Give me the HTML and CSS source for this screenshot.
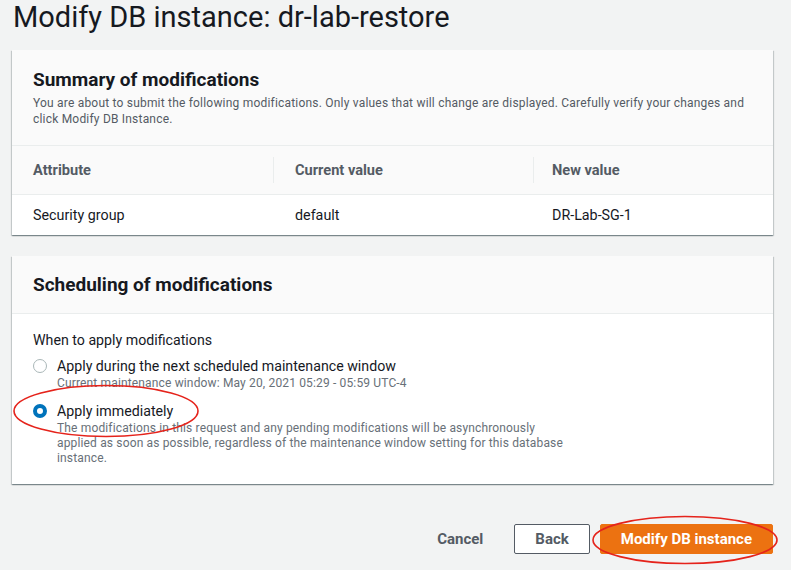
FILE: index.html
```html
<!DOCTYPE html>
<html>
<head>
<meta charset="utf-8">
<link rel="stylesheet" href="styles.css">
</head>
<body>
<div class="page">
  <h1 class="title">Modify DB instance: dr-lab-restore</h1>

  <section class="panel">
    <div class="panel-head head1">
      <h2 class="panel-title">Summary of modifications</h2>
      <p class="panel-desc">You are about to submit the following modifications. Only values that will change are displayed. Carefully verify your changes and click Modify DB Instance.</p>
    </div>
    <div class="table">
      <div class="tr th">
        <div class="cell c1">Attribute</div>
        <div class="cell c2 sep">Current value</div>
        <div class="cell c3 sep">New value</div>
      </div>
      <div class="tr td">
        <div class="cell c1">Security group</div>
        <div class="cell c2">default</div>
        <div class="cell c3">DR-Lab-SG-1</div>
      </div>
    </div>
  </section>

  <section class="panel panel2">
    <div class="panel-head head2">
      <h2 class="panel-title">Scheduling of modifications</h2>
    </div>
    <div class="panel-body">
      <div class="field-label">When to apply modifications</div>
      <div class="radio-row">
        <span class="radio"></span>
        <div class="radio-text">
          <div class="radio-label">Apply during the next scheduled maintenance window</div>
          <div class="radio-desc">Current maintenance window: May 20, 2021 05:29 - 05:59 UTC-4</div>
        </div>
      </div>
      <div class="radio-row second">
        <span class="radio checked"></span>
        <div class="radio-text">
          <div class="radio-label">Apply immediately</div>
          <div class="radio-desc wrap">The modifications in this request and any pending modifications will be asynchronously applied as soon as possible, regardless of the maintenance window setting for this database instance.</div>
        </div>
      </div>
    </div>
  </section>

  <div class="actions">
    <button class="btn btn-link">Cancel</button>
    <button class="btn btn-normal">Back</button>
    <button class="btn btn-primary">Modify DB instance</button>
  </div>

  <svg class="annot" width="791" height="570" viewBox="0 0 791 570">
    <ellipse cx="106" cy="411" rx="92" ry="25.5" fill="none" stroke="#e5231b" stroke-width="1.6"/>
    <ellipse cx="685" cy="540" rx="92" ry="23.5" fill="none" stroke="#e5231b" stroke-width="1.6"/>
  </svg>
</div>
</body>
</html>
```

FILE: styles.css
```css
html, body {
  margin: 0;
  padding: 0;
  background: #f2f3f3;
}

body {
  font-family: Roboto, "Noto Sans", sans-serif;
  color: #16191f;
  width: 791px;
  height: 570px;
  overflow: hidden;
}

.page {
  position: relative;
  padding: 0 18px 0 12px;
  height: 570px;
  box-sizing: border-box;
}

.title {
  margin: 0 0 0 1px;
  font-size: 29px;
  line-height: 34px;
  font-weight: 400;
  color: #16191f;
}

.panel {
  margin-top: 16px;
  background: #fff;
  box-shadow: 0 1px 1px 0 rgba(0, 28, 36, 0.3), 1px 1px 1px 0 rgba(0, 28, 36, 0.15), -1px 1px 1px 0 rgba(0, 28, 36, 0.15);
}

.panel2 {
  margin-top: 21px;
}

.panel-head {
  background: #fafafa;
  border-bottom: 1px solid #eaeded;
}

.head1 {
  padding: 19px 21px 18px 21px;
}

.head2 {
  padding: 18px 21px 17px 21px;
}

.panel-title {
  margin: 0;
  font-size: 19px;
  line-height: 22px;
  font-weight: 700;
  color: #16191f;
}

.panel-desc {
  margin: 4px 0 0 0;
  font-size: 12px;
  line-height: 16px;
  letter-spacing: 0.2px;
  color: #545b64;
}

.tr {
  display: grid;
  grid-template-columns: 261px 260px 1fr;
}

.th {
  background: #fafafa;
  padding: 11px 0;
  height: 48px;
  box-sizing: border-box;
}

.th .cell {
  height: 26px;
  line-height: 26px;
  font-size: 14.6px;
  font-weight: 700;
  color: #545b64;
}

.td {
  border-top: 1px solid #eaeded;
  padding: 10px 0;
}

.td .cell {
  font-size: 14.3px;
  line-height: 20px;
  color: #16191f;
}

.c1 {
  padding-left: 21px;
}

.c2 {
  padding-left: 21px;
}

.c3 {
  padding-left: 18px;
}

.th .sep {
  border-left: 1px solid #eaeded;
}

.td .c2 {
  padding-left: 22px;
}

.td .c3 {
  padding-left: 19px;
}

.panel-body {
  padding: 16px 21px 18px 21px;
}

.field-label {
  font-size: 14.2px;
  line-height: 20px;
  color: #16191f;
}

.radio-row {
  display: flex;
  align-items: flex-start;
  gap: 10px;
  margin-top: 6px;
}

.radio-row.second {
  margin-top: 10px;
}

.radio {
  flex: none;
  width: 14px;
  height: 14px;
  margin-top: 3px;
  border-radius: 50%;
  border: 1.5px solid #aab7b8;
  box-sizing: border-box;
  background: #fff;
}

.radio.checked {
  border: 4px solid #0073bb;
}

.radio-label {
  font-size: 14.2px;
  line-height: 20px;
  color: #16191f;
}

.radio-desc {
  font-size: 12px;
  line-height: 15px;
  letter-spacing: 0.15px;
  color: #687078;
}

.radio-desc.wrap {
  width: 516px;
}

.actions {
  display: flex;
  justify-content: flex-end;
  gap: 10px;
  margin-top: 40px;
}

.btn {
  font-family: Roboto, "Noto Sans", sans-serif;
  font-size: 15px;
  font-weight: 700;
  height: 30px;
  padding: 0 20px;
  border-radius: 2px;
  box-sizing: border-box;
  cursor: pointer;
}

.btn-link {
  background: transparent;
  border: 1px solid transparent;
  color: #545b64;
}

.btn-normal {
  background: #fff;
  border: 1px solid #545b64;
  color: #545b64;
}

.btn-primary {
  background: #ec7211;
  border: 1px solid #ec7211;
  color: #fff;
}

.annot {
  position: absolute;
  left: 0;
  top: 0;
  pointer-events: none;
}
```
